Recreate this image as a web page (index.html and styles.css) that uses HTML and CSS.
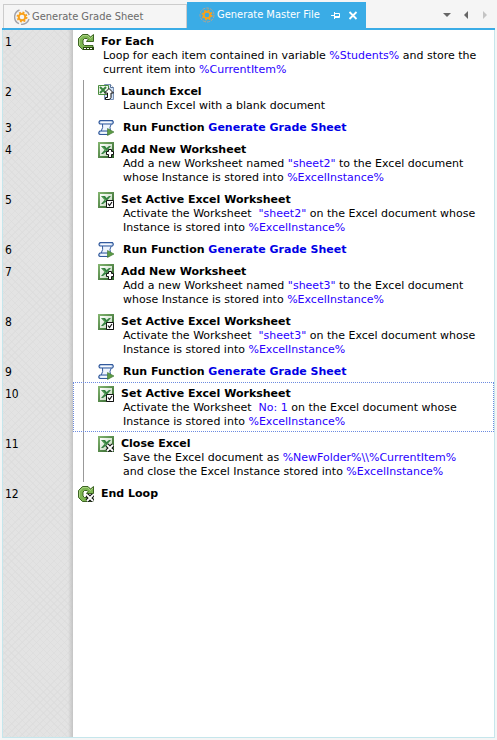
FILE: index.html
```
<!DOCTYPE html>
<html lang="en">
<head>
<meta charset="utf-8">
<title>Generate Master File</title>
<link rel="stylesheet" href="styles.css">
</head>
<body>
<svg class="defs" aria-hidden="true">
  <defs>
    <linearGradient id="green" x1="0" y1="0" x2="1" y2="1"><stop offset="0" stop-color="#86b872"/><stop offset="1" stop-color="#2b5f28"/></linearGradient>
    <linearGradient id="sheet" x1="0" y1="0" x2="1" y2="1"><stop offset="0" stop-color="#fff"/><stop offset="1" stop-color="#b9d3b1"/></linearGradient>
    <symbol id="gear" viewBox="0 0 16 16">
      <g fill="none" stroke="#f9a11b"><circle cx="8" cy="8" r="3.3" stroke-width="2"/><circle cx="8" cy="8" r="4.7" stroke-width="1.6" stroke-dasharray="1.9 1.79"/></g>
    </symbol>
    <symbol id="loop" viewBox="0 0 16 16">
      <path d="M4.500.500H10l2.500 2.500L15.500.500v7h-7l1.500-2-1-1H6.500L5 6v4l1.500 1.500H15v4H4.500l-4-4v-7z" fill="#7db552" stroke="#2f5714" stroke-width=".9"/>
      <path d="M5 1.500h4.500l3 3L15 2M1.500 11V5L5 1.500" fill="none" stroke="#b5d890" stroke-width=".8"/>
    </symbol>
    <symbol id="excel" viewBox="0 0 16 16">
      <path d="M0 0h16v16H0z" fill="url(#green)"/><path d="M2 2h12v12H2z" fill="url(#sheet)"/>
      <path d="M3 4h4l1.500 2L11 4h2L9.500 8l3.500 4H9L7.500 10 5 12H3l3.500-4z" fill="#348040"/><path d="M4 4.500 10.500 11.500" stroke="#79b670"/>
    </symbol>
    <symbol id="script" viewBox="0 0 16 16">
      <path d="M4.500 3.500h9q-2.500 3.500-1 8H3q2.500-4 1.500-8z" fill="#edf4fd" stroke="#31599c"/>
      <path d="M2 .7h12.500q1.500 1.300 0 3.300H2Q0 2.500 2 .7z" fill="#d9e7f8" stroke="#31599c" stroke-width="1.200"/>
      <path d="M2 11h8.500v3.500H2q-2.500-1.500 0-3.500z" fill="#d9e7f8" stroke="#31599c" stroke-width="1.200"/>
      <path d="M3 2.300h10M3 12.800h6" stroke="#fff"/>
      <path d="M9.500 8.500v7L16 12z" fill="#5c9b45" stroke="#3d7432" stroke-width=".6"/>
    </symbol>
    <symbol id="plus" viewBox="0 0 16 16"><path d="M10.500 7.500h3v2h2v3h-2v3h-3v-3h-2v-3h2z" fill="#fff" stroke="#111"/></symbol>
    <symbol id="check" viewBox="0 0 16 16"><path d="M8.500 8.500h7v7h-7z" fill="#fff" stroke="#111"/><path d="m10 11.500 1.500 2 2.500-3.500" fill="none" stroke="#111" stroke-width="1.200"/></symbol>
    <symbol id="cross" viewBox="0 0 16 16"><path d="m9 9 6 6m0-6-6 6" stroke="#111" stroke-width="4"/><path d="m9 9 6 6m0-6-6 6" stroke="#fff" stroke-width="1.800"/></symbol>
  </defs>
</svg>
<header class="tabs">
  <button class="tab" type="button">
    <svg class="icon" viewBox="0 0 16 16"><use href="#gear"/><path d="M5.500 1A7.400 7.400 0 0 0 5 14.700M7 15.300A7.400 7.400 0 0 0 15 10M11 1.300A7.400 7.400 0 0 1 15.300 6" fill="none" stroke="#a2a2a8" stroke-width="1.400"/></svg>
    <span>Generate Grade Sheet</span>
  </button>
  <div class="tab active">
    <svg class="icon" viewBox="0 0 16 16"><use href="#gear"/><circle cx="8" cy="8" r="7" fill="none" stroke="#b5a48e" stroke-dasharray="3 1"/></svg>
    <span>Generate Master File</span>
    <button class="tool pin" type="button" aria-label="Pin tab"><svg viewBox="0 0 10 10"><path d="M0 5.500h3M3.500 2v7M4 3.500h4.500v4H4M4 6.500h5" fill="none" stroke="#fff"/></svg></button>
    <button class="tool" type="button" aria-label="Close tab"><svg viewBox="0 0 10 10"><path d="m1.500 2 7 7m0-7-7 7" stroke="#fff" stroke-width="1.800"/></svg></button>
  </div>
  <nav class="nav">
    <button class="tool" type="button" aria-label="List tabs"><svg viewBox="0 0 10 10"><path d="M1 3h8L5 7z" fill="#666"/></svg></button>
    <button class="tool" type="button" aria-label="Previous tab"><svg viewBox="0 0 10 10"><path d="M7 1v8L3 5z" fill="#666"/></svg></button>
    <button class="tool" type="button" aria-label="Next tab"><svg viewBox="0 0 10 10"><path d="M3 1v8l4-4z" fill="#c4c4c4"/></svg></button>
  </nav>
</header>
<main class="editor">
  <section class="row root">
    <span class="num">1</span>
    <div class="step"><svg class="icon" viewBox="0 0 16 16"><use href="#loop"/><path d="M5 13h11v3H5z" fill="#28480f"/><path d="M6 14h2v1H6zM9 14h2v1H9zM12 14h2v1h-2z" fill="#fff"/></svg>
    <div class="text"><h2>For Each</h2><p>Loop for each item contained in variable <b>%Students%</b> and store the<br>current item into <b>%CurrentItem%</b></p></div></div>
  </section>
  <section class="row">
    <span class="num">2</span>
    <div class="step"><svg class="icon" viewBox="0 0 16 16"><path d="M6.500.500h6l3 3v12h-9z" fill="#cfe0f5" stroke="#7890b5"/><path d="M12.500.500v3h3" fill="#fff" stroke="#587399"/><path d="M.5 1.500h10v9H.5z" fill="#edf5e8" stroke="#4b8d3f"/><path d="m2 3 6 6m0-6L2 9" stroke="#388440" stroke-width="2"/><path d="M11 4.500 15.500 9h-2.500v4.500l-1.500 2H7.500v-2h2V9H6.500z" fill="#fff" stroke="#111"/></svg>
    <div class="text"><h2>Launch Excel</h2><p>Launch Excel with a blank document</p></div></div>
  </section>
  <section class="row">
    <span class="num">3</span>
    <div class="step"><svg class="icon" viewBox="0 0 16 16"><use href="#script"/></svg>
    <div class="text"><h2 class="call">Run Function <a href="#grade">Generate Grade Sheet</a></h2></div></div>
  </section>
  <section class="row">
    <span class="num">4</span>
    <div class="step"><svg class="icon" viewBox="0 0 16 16"><use href="#excel"/><use href="#plus"/></svg>
    <div class="text"><h2>Add New Worksheet</h2><p>Add a new Worksheet named <b>"sheet2"</b> to the Excel document<br>whose Instance is stored into <b>%ExcelInstance%</b></p></div></div>
  </section>
  <section class="row">
    <span class="num">5</span>
    <div class="step"><svg class="icon" viewBox="0 0 16 16"><use href="#excel"/><use href="#check"/></svg>
    <div class="text"><h2>Set Active Excel Worksheet</h2><p>Activate the Worksheet &nbsp;<b>"sheet2"</b> on the Excel document whose<br>Instance is stored into <b>%ExcelInstance%</b></p></div></div>
  </section>
  <section class="row">
    <span class="num">6</span>
    <div class="step"><svg class="icon" viewBox="0 0 16 16"><use href="#script"/></svg>
    <div class="text"><h2 class="call">Run Function <a href="#grade">Generate Grade Sheet</a></h2></div></div>
  </section>
  <section class="row">
    <span class="num">7</span>
    <div class="step"><svg class="icon" viewBox="0 0 16 16"><use href="#excel"/><use href="#plus"/></svg>
    <div class="text"><h2>Add New Worksheet</h2><p>Add a new Worksheet named <b>"sheet3"</b> to the Excel document<br>whose Instance is stored into <b>%ExcelInstance%</b></p></div></div>
  </section>
  <section class="row">
    <span class="num">8</span>
    <div class="step"><svg class="icon" viewBox="0 0 16 16"><use href="#excel"/><use href="#check"/></svg>
    <div class="text"><h2>Set Active Excel Worksheet</h2><p>Activate the Worksheet &nbsp;<b>"sheet3"</b> on the Excel document whose<br>Instance is stored into <b>%ExcelInstance%</b></p></div></div>
  </section>
  <section class="row">
    <span class="num">9</span>
    <div class="step"><svg class="icon" viewBox="0 0 16 16"><use href="#script"/></svg>
    <div class="text"><h2 class="call">Run Function <a href="#grade">Generate Grade Sheet</a></h2></div></div>
  </section>
  <section class="row selected">
    <span class="num">10</span>
    <div class="step"><svg class="icon" viewBox="0 0 16 16"><use href="#excel"/><use href="#check"/></svg>
    <div class="text"><h2>Set Active Excel Worksheet</h2><p>Activate the Worksheet &nbsp;<b>No: 1</b> on the Excel document whose<br>Instance is stored into <b>%ExcelInstance%</b></p></div></div>
  </section>
  <section class="row">
    <span class="num">11</span>
    <div class="step"><svg class="icon" viewBox="0 0 16 16"><use href="#excel"/><use href="#cross"/></svg>
    <div class="text"><h2>Close Excel</h2><p>Save the Excel document as <b>%NewFolder%\\%CurrentItem%</b><br>and close the Excel Instance stored into <b>%ExcelInstance%</b></p></div></div>
  </section>
  <section class="row root">
    <span class="num">12</span>
    <div class="step"><svg class="icon" viewBox="0 0 16 16"><use href="#loop"/><use href="#cross"/></svg>
    <div class="text"><h2>End Loop</h2></div></div>
  </section>
</main>
</body>
</html>
```
FILE: styles.css
```
* { box-sizing: border-box; }
body {
  margin: 0;
  padding: 0 2px 2px;
  min-height: 100vh;
  display: flex;
  flex-direction: column;
  background: #f5f5f5;
  color: #000;
  font: 11px/14px "DejaVu Sans", sans-serif;
}
.defs { position: absolute; width: 0; height: 0; }
button { border: 0; padding: 0; background: none; font: inherit; color: inherit; }
.icon { width: 16px; height: 16px; flex: none; display: block; }
.tabs {
  display: flex;
  align-items: stretch;
  height: 30px;
  padding: 2px 0 0 1px;
  border-bottom: 2px solid #3aace6;
  font: 11px/16px "DejaVu Sans Condensed", "DejaVu Sans", sans-serif;
  white-space: nowrap;
}
.tab {
  display: flex;
  align-items: center;
  gap: 2px;
  width: 184px;
  margin-top: 2px;
  padding-left: 10px;
  border: 1px solid #ccc;
  border-bottom: 0;
  color: #6a6a6a;
}
.tab.active { width: 179px; margin: 0; padding-left: 12px; border: 0; background: #3aace6; color: #fff; }
.tool { width: 10px; height: 10px; flex: none; }
.tool svg { display: block; width: 10px; height: 10px; }
.pin { margin: 0 5px 0 9px; }
.nav { display: flex; align-items: center; gap: 9px; margin-left: auto; padding-right: 5px; }
.editor {
  flex: 1;
  padding-bottom: 8px;
  border: solid #c5e6ec;
  border-width: 0 1px 1px;
  background:
    linear-gradient(90deg, transparent 65px, #c4c4c4 70px, #fff 70px),
    repeating-linear-gradient(45deg, #dadada80 0 1px, transparent 1px 5px),
    repeating-linear-gradient(-45deg, #dadada80 0 1px, transparent 1px 5px),
    #e3e3e3;
}
.row { display: grid; grid-template-columns: 70px 1fr; white-space: nowrap; }
.num { padding: 5px 0 0 2px; font-size: 12px; font-family: "DejaVu Sans Condensed", "DejaVu Sans", sans-serif; line-height: 14px; }
.step {
  display: flex;
  gap: 7px;
  padding: 5px 0 3px 25px;
  background: linear-gradient(#999, #999) 10px 0 / 1px 100% no-repeat;
}
.step .icon { margin: -1px 0; }
.root .step { padding-left: 5px; background: none; }
.selected .step {
  padding: 4px 0 2px 24px;
  border: 1px dotted #6c8be0;
  background-position: 9px 0;
}
h2 { margin: 0; font-size: 11px; line-height: 14px; }
p { margin: 0; padding-left: 2px; }
p b { font-weight: normal; color: #2a00ff; }
.call { padding-left: 2px; }
a { color: #0000e6; text-decoration: none; }
```
